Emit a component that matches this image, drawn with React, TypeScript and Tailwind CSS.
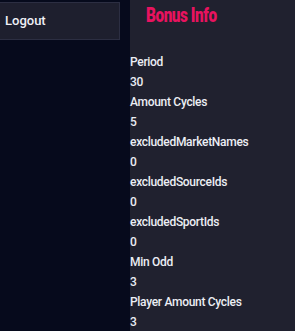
export default function App() {
  const rows: [string, string][] = [
    ["Period", "30"],
    ["Amount Cycles", "5"],
    ["excludedMarketNames", "0"],
    ["excludedSourceIds", "0"],
    ["excludedSportIds", "0"],
    ["Min Odd", "3"],
    ["Player Amount Cycles", "3"],
  ];

  return (
    <div className="flex h-[331px] w-[295px] overflow-hidden bg-[#060a1c] font-['Roboto',sans-serif]">
      {/* sidebar */}
      <div className="w-[130px] shrink-0 pt-[2px]">
        <div className="flex h-[38px] w-[120px] items-center border-y border-r border-[#2c2e42] bg-[#1e1f2e] pl-[5px] text-[13px] font-medium text-[#eef0f6]">
          Logout
        </div>
      </div>

      {/* content */}
      <div className="flex-1 bg-[#20212f]">
        <h2 className="mt-px h-[28px] pl-4 text-[21px] font-black leading-[28px] tracking-[-0.6px] text-[#e8135f]">
          <span className="inline-block origin-left scale-x-[0.73]">Bonus Info</span>
        </h2>
        <div className="mt-[23px] text-[12px] font-medium leading-[20px] tracking-[-0.3px] text-[#eceef4]">
          {rows.map(([label, value]) => (
            <div key={label}>
              <p>{label}</p>
              <p>{value}</p>
            </div>
          ))}
        </div>
      </div>
    </div>
  );
}
